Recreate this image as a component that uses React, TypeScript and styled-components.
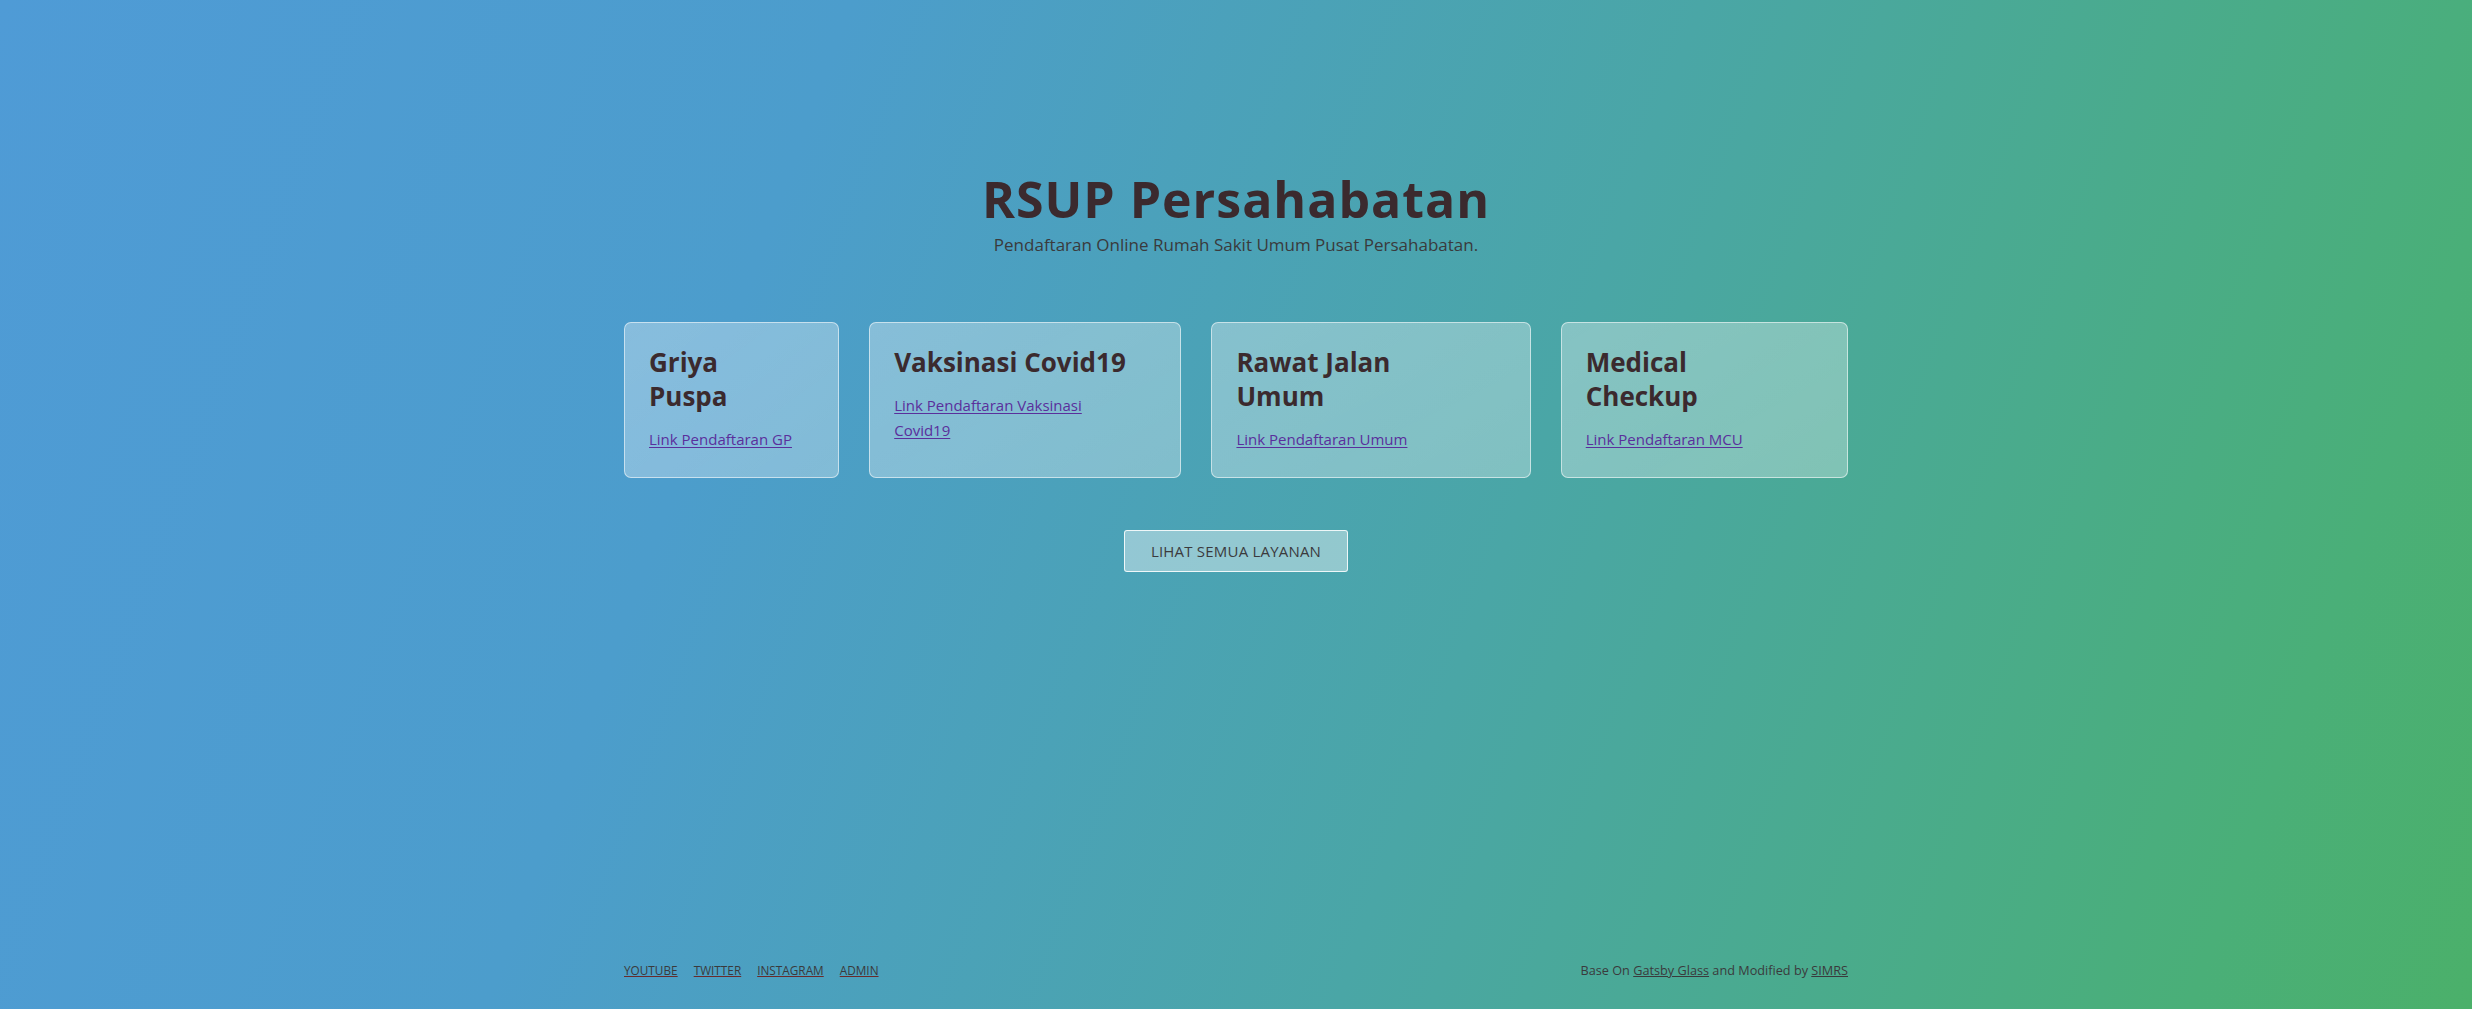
import React from "react";
import styled, { createGlobalStyle } from "styled-components";

const Global = createGlobalStyle`
  html, body { margin: 0; padding: 0; height: 100%; }
  body {
    font-family: "Open Sans", "Noto Sans", sans-serif;
    background: linear-gradient(110deg, #4f9bd6 0%, #4c9dcc 30%, #4aa6a6 60%, #4aaf78 90%, #4bb06a 100%);
    min-height: 100vh;
    color: #3a3033;
  }
  #root { min-height: 100vh; }
`;

const Page = styled.div`
  min-height: 100vh;
  display: flex;
  flex-direction: column;
  align-items: center;
  box-sizing: border-box;
`;

const Container = styled.div`
  width: 1224px;
  display: flex;
  flex-direction: column;
  flex: 1;
`;

const Main = styled.main`
  flex: 1;
  display: flex;
  flex-direction: column;
  align-items: center;
  padding-top: 169px;
`;

const Title = styled.h1`
  margin: 0;
  font-size: 50px;
  line-height: 60px;
  font-weight: 700;
  color: #3b2a2e;
  letter-spacing: 1px;
`;

const Subtitle = styled.p`
  margin: 5px 0 0 0;
  font-size: 17px;
  line-height: 22px;
  color: #3a3a3c;
`;

const Cards = styled.div`
  margin-top: 66px;
  width: 100%;
  display: grid;
  grid-template-columns: 215fr 312fr 319fr 287fr;
  column-gap: 30px;
`;

const Card = styled.div`
  box-sizing: border-box;
  height: 156px;
  padding: 22px 24px;
  border-radius: 7px;
  border: 1px solid rgba(255, 255, 255, 0.55);
  background: linear-gradient(to right bottom, rgba(255, 255, 255, 0.33), rgba(255, 255, 255, 0.3));
`;

const CardTitle = styled.h2`
  margin: 0 0 14px 0;
  font-size: 26px;
  line-height: 34px;
  font-weight: 700;
  color: #3b2a2e;
`;

const TitleLine = styled.span`
  display: block;
`;

const CardLink = styled.a`
  display: block;
  max-width: 205px;
  font-size: 15px;
  line-height: 25px;
  color: #5a2f9c;
  text-decoration: underline;
  text-underline-offset: 2px;
`;

const Button = styled.button`
  margin-top: 52px;
  width: 224px;
  height: 42px;
  box-sizing: border-box;
  border-radius: 3px;
  border: 1px solid rgba(255, 255, 255, 0.85);
  background: rgba(255, 255, 255, 0.4);
  font-family: "Open Sans", "Noto Sans", sans-serif;
  font-size: 15px;
  color: #3b3a3d;
  letter-spacing: 0.2px;
  cursor: pointer;
`;

const Footer = styled.footer`
  display: flex;
  justify-content: space-between;
  align-items: center;
  padding-bottom: 30px;
  font-size: 12.7px;
  color: #3a3a3c;
`;

const FooterLinks = styled.nav`
  display: flex;
  gap: 16px;
  font-size: 11.8px;
`;

const FooterLink = styled.a`
  color: #3a3a3c;
  text-decoration: underline;
  text-decoration-color: #6b2a2a;
  text-transform: uppercase;
`;

const Credit = styled.span``;

const CreditLink = styled.a`
  color: #3a3a3c;
  text-decoration: underline;
`;

const services = [
  { title: ["Griya", "Puspa"], link: "Link Pendaftaran GP" },
  { title: ["Vaksinasi Covid19"], link: "Link Pendaftaran Vaksinasi Covid19" },
  { title: ["Rawat Jalan", "Umum"], link: "Link Pendaftaran Umum" },
  { title: ["Medical", "Checkup"], link: "Link Pendaftaran MCU" },
];

export default function App() {
  return (
    <>
      <Global />
      <Page>
        <Container>
          <Main>
            <Title>RSUP Persahabatan</Title>
            <Subtitle>Pendaftaran Online Rumah Sakit Umum Pusat Persahabatan.</Subtitle>
            <Cards>
              {services.map((s) => (
                <Card key={s.link}>
                  <CardTitle>
                    {s.title.map((line) => (
                      <TitleLine key={line}>{line}</TitleLine>
                    ))}
                  </CardTitle>
                  <CardLink href="#">{s.link}</CardLink>
                </Card>
              ))}
            </Cards>
            <Button>LIHAT SEMUA LAYANAN</Button>
          </Main>
          <Footer>
            <FooterLinks>
              <FooterLink href="#">Youtube</FooterLink>
              <FooterLink href="#">Twitter</FooterLink>
              <FooterLink href="#">Instagram</FooterLink>
              <FooterLink href="#">Admin</FooterLink>
            </FooterLinks>
            <Credit>
              Base On <CreditLink href="#">Gatsby Glass</CreditLink> and Modified by{" "}
              <CreditLink href="#">SIMRS</CreditLink>
            </Credit>
          </Footer>
        </Container>
      </Page>
    </>
  );
}
